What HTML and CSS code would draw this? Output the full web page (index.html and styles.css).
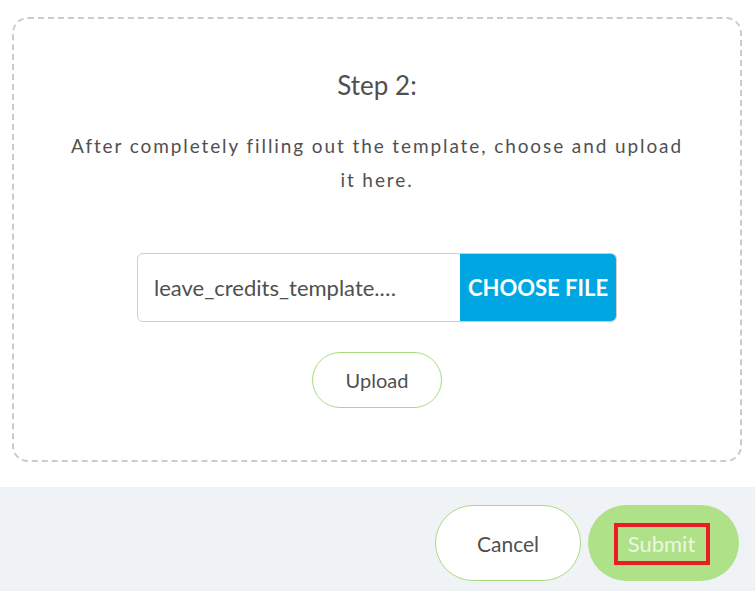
FILE: index.html
```html
<!DOCTYPE html>
<html lang="en">
<head>
    <meta charset="UTF-8">
    <meta name="viewport" content="width=device-width, initial-scale=1.0">
    <title>Upload Leave Credits</title>
    <link rel="stylesheet" href="styles.css">
</head>
<body>
    <main class="dialog-body">
        <div class="step-box">
            <div class="step-title">Step 2:</div>
            <p class="step-text">After completely filling out the template, choose and upload it here.</p>
            <div class="file-input">
                <span class="file-name">leave_credits_template.xlsx</span>
                <button class="choose-btn">CHOOSE FILE</button>
            </div>
            <button class="upload-btn">Upload</button>
        </div>
    </main>
    <footer class="dialog-footer">
        <button class="cancel-btn">Cancel</button>
        <button class="submit-btn"><span class="submit-label">Submit</span></button>
    </footer>
</body>
</html>
```

FILE: styles.css
```css
body {
    font-family: Lato, "Open Sans", sans-serif;
    background-color: #fff;
    color: #505050;
    margin: 0;
    padding: 0;
}
.dialog-body {
    padding: 17px 13px 25px 12px;
}
.step-box {
    display: flex;
    flex-direction: column;
    align-items: center;
    height: 445px;
    box-sizing: border-box;
    border: 2px dashed #cbcbcb;
    border-radius: 16px;
    padding: 51px 40px 0;
}
.step-title {
    font-size: 26px;
    line-height: 30px;
}
.step-text {
    margin: 29px 0 0;
    font-size: 19px;
    line-height: 34px;
    letter-spacing: 1.9px;
    text-align: center;
    max-width: 630px;
}
.file-input {
    display: flex;
    width: 480px;
    height: 69px;
    box-sizing: border-box;
    margin-top: 56px;
    border: 1px solid #cfcfcf;
    border-radius: 6px;
    overflow: hidden;
}
.file-name {
    flex: 1;
    padding: 0 54px 0 16px;
    font-size: 22px;
    line-height: 67px;
    white-space: nowrap;
    overflow: hidden;
    text-overflow: ellipsis;
}
.choose-btn {
    width: 156px;
    border: none;
    background-color: #00a6e2;
    color: #fff;
    font-family: inherit;
    font-size: 22px;
    font-weight: bold;
    padding: 0;
}
.upload-btn {
    margin-top: 30px;
    width: 130px;
    height: 56px;
    border: 1px solid #a6dc7e;
    border-radius: 28px;
    background-color: #fff;
    color: #505050;
    font-family: inherit;
    font-size: 20px;
}
.dialog-footer {
    display: flex;
    justify-content: flex-end;
    gap: 7px;
    height: 104px;
    box-sizing: border-box;
    padding: 18px 16px 0 0;
    background-color: #eff3f6;
}
.cancel-btn, .submit-btn {
    height: 76px;
    border-radius: 38px;
    font-family: inherit;
    font-size: 21px;
}
.cancel-btn {
    width: 146px;
    border: 1px solid #a6dc7e;
    background-color: #fff;
    color: #505050;
}
.submit-btn {
    width: 151px;
    border: none;
    background-color: #afe188;
    color: #eaf7e2;
    display: flex;
    align-items: center;
    justify-content: center;
    padding: 2px 4px 0 0;
}
.submit-label {
    border: 4px solid #ec1c24;
    padding: 4px 8px;
    width: 96px;
    height: 42px;
    box-sizing: border-box;
    font-size: 22px;
    line-height: 26px;
    text-align: center;
}
```
